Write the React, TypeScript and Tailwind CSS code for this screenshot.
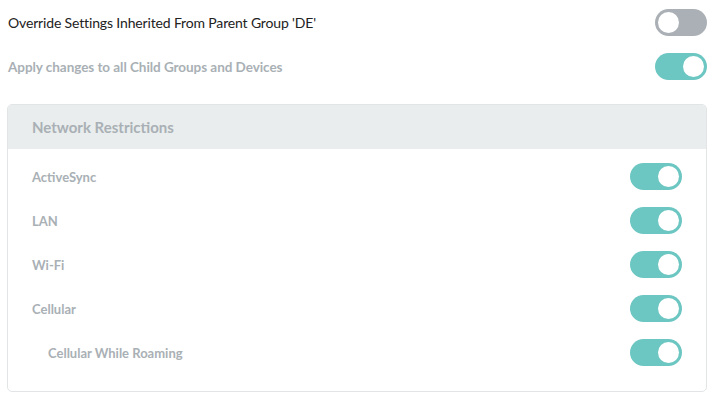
import React from "react";

interface ToggleProps {
  on: boolean;
  muted?: boolean;
}

function Toggle({ on, muted }: ToggleProps) {
  return (
    <div
      className={`flex h-[27px] w-[52px] shrink-0 items-center rounded-full px-[3px] ${
        muted ? "bg-[#aab0b5]" : "bg-[#6cc6c2]"
      } ${on ? "justify-end" : "justify-start"}`}
    >
      <div className="h-[21px] w-[21px] rounded-full bg-white" />
    </div>
  );
}

const rows = [
  { label: "ActiveSync", indent: false },
  { label: "LAN", indent: false },
  { label: "Wi-Fi", indent: false },
  { label: "Cellular", indent: false },
  { label: "Cellular While Roaming", indent: true },
];

export default function App() {
  return (
    <div
      className="h-[397px] w-[716px] bg-white pl-[7px] pr-[9px] text-[14px]"
      style={{ fontFamily: "Lato, 'Open Sans', sans-serif" }}
    >
      <div className="flex h-[44px] items-center justify-between pl-px">
        <span className="tracking-[-0.15px] text-[#222]">
          Override Settings Inherited From Parent Group 'DE'
        </span>
        <Toggle on={false} muted />
      </div>
      <div className="flex h-[44px] items-center justify-between pl-px">
        <span className="mt-[2px] text-[13.5px] font-bold tracking-[-0.05px] text-[#a9b0b5]">
          Apply changes to all Child Groups and Devices
        </span>
        <Toggle on />
      </div>

      <div className="mt-[16px] w-[700px] overflow-hidden rounded-[5px] border border-[#e2e5e6]">
        <div className="flex h-[44px] items-center bg-[#e9eded] px-6 text-[15px] font-bold text-[#a9b0b5]">
          Network Restrictions
        </div>
        <div className="pt-[5px] pb-[17px]">
          {rows.map((r) => (
            <div
              key={r.label}
              className="flex h-[44px] items-center justify-between pr-6"
            >
              <span
                className={`mt-[3px] text-[13px] font-bold text-[#a9b0b5] ${
                  r.indent ? "pl-10" : "pl-6"
                }`}
              >
                {r.label}
              </span>
              <Toggle on />
            </div>
          ))}
        </div>
      </div>
    </div>
  );
}
